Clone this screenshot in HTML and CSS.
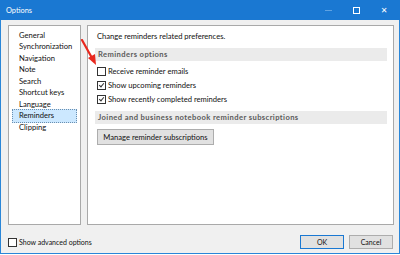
FILE: index.html
```html
<!DOCTYPE html>
<html lang="en">
<head>
    <meta charset="UTF-8">
    <title>Options</title>
    <link rel="stylesheet" href="styles.css">
</head>
<body>
    <div class="window">
        <div class="titlebar">
            <span class="title">Options</span>
            <div class="controls">
                <span class="ctl min"></span>
                <span class="ctl max"></span>
                <span class="ctl close">&#x2715;</span>
            </div>
        </div>

        <div class="content">
            <ul class="nav-list">
                <li>General</li>
                <li>Synchronization</li>
                <li>Navigation</li>
                <li>Note</li>
                <li>Search</li>
                <li>Shortcut keys</li>
                <li>Language</li>
                <li class="selected">Reminders</li>
                <li>Clipping</li>
            </ul>

            <div class="panel">
                <p class="intro">Change reminders related preferences.</p>
                <div class="section-head">Reminders options</div>
                <label class="check"><span class="box"></span>Receive reminder emails</label>
                <label class="check"><span class="box checked"></span>Show upcoming reminders</label>
                <label class="check"><span class="box checked"></span>Show recently completed reminders</label>
                <div class="section-head second">Joined and business notebook reminder subscriptions</div>
                <button class="btn manage" type="button">Manage reminder subscriptions</button>
            </div>
        </div>

        <div class="footer">
            <label class="check small"><span class="box"></span>Show advanced options</label>
            <div class="actions">
                <button class="btn default" type="button">OK</button>
                <button class="btn" type="button">Cancel</button>
            </div>
        </div>

        <svg class="arrow" width="20" height="30" viewBox="0 0 20 30">
            <line x1="2" y1="1" x2="12" y2="19" stroke="#e8281e" stroke-width="2.2" stroke-linecap="round"/>
            <polygon points="16,26 8,19 15,15" fill="#e8281e"/>
        </svg>
    </div>
</body>
</html>
```

FILE: styles.css
```css
body {
    margin: 0;
    background: #ffffff;
    font-family: Lato, "Noto Sans", sans-serif;
    font-size: 7.6px;
    color: #111;
}
.window {
    position: relative;
    width: 398px;
    height: 233px;
    background: #f0f0f0;
    border: 1px solid #2a86d8;
    border-top: none;
    padding-top: 20px;
}
.titlebar {
    position: absolute;
    top: 0;
    left: -1px;
    right: -1px;
    height: 20px;
    background: #1a78d2;
    color: #ffffff;
    display: flex;
    align-items: center;
    justify-content: space-between;
}
.title {
    padding-left: 6px;
    font-size: 7.4px;
}
.controls {
    display: flex;
    align-items: center;
    height: 100%;
}
.ctl {
    width: 28px;
    display: flex;
    justify-content: center;
    align-items: center;
    color: #ffffff;
}
.min::before {
    content: "";
    width: 7px;
    height: 1px;
    background: #5fa2e2;
}
.max::before {
    content: "";
    width: 5px;
    height: 5px;
    border: 1px solid #ffffff;
}
.close {
    font-family: "DejaVu Sans", sans-serif;
    font-size: 8px;
    padding-right: 2px;
}
.content {
    display: flex;
    gap: 6px;
    padding: 5px 5px 0 7px;
}
.nav-list {
    list-style: none;
    margin: 0;
    padding: 3px 2px;
    width: 67px;
    height: 192px;
    background: #ffffff;
    border: 1px solid #a9a9a9;
}
.nav-list li {
    height: 11.45px;
    line-height: 11.45px;
    padding-left: 6px;
    margin: 0 1px -2px;
    border: 1px solid transparent;
}
.nav-list li:last-child {
    margin-bottom: 0;
}
.nav-list li.selected {
    background: #cce8ff;
    border: 1px dotted #6a8fb0;
}
.panel {
    flex: 1;
    height: 198px;
    background: #ffffff;
    border: 1px solid #a9a9a9;
    padding: 0 6px 0 7px;
}
.intro {
    margin: 6px 0 0 2px;
    height: 16px;
    line-height: 9px;
}
.section-head {
    height: 13px;
    line-height: 13px;
    background: #ebebeb;
    color: #5a5a5a;
    font-weight: 700;
    letter-spacing: 0.4px;
    padding-left: 3px;
    margin-bottom: 3px;
}
.section-head.second {
    margin-top: 5px;
}
.check {
    display: flex;
    align-items: center;
    height: 14px;
    padding-left: 2px;
}
.box {
    width: 7px;
    height: 7px;
    border: 1px solid #333;
    background: #ffffff;
    margin-right: 2px;
    position: relative;
}
.box.checked::after {
    content: "";
    position: absolute;
    left: 2px;
    top: 0px;
    width: 2px;
    height: 4px;
    border: solid #333;
    border-width: 0 1px 1px 0;
    transform: rotate(40deg);
}
.btn {
    font-family: Lato, "Noto Sans", sans-serif;
    font-size: 7.6px;
    color: #111;
    background: #e1e1e1;
    border: 1px solid #adadad;
    padding: 0;
    height: 14px;
    line-height: 12px;
    white-space: nowrap;
}
.manage {
    margin: 2px 0 0 2px;
    width: 117px;
    height: 16px;
}
.footer {
    display: flex;
    justify-content: space-between;
    align-items: center;
    padding: 10px 6px 0 7px;
}
.check.small {
    padding-left: 0;
    font-size: 7px;
}
.actions {
    display: flex;
    gap: 5px;
}
.actions .btn {
    width: 44px;
    font-size: 7px;
}
.btn.default {
    border: 1px solid #1a78d2;
}
.arrow {
    position: absolute;
    left: 79px;
    top: 39px;
}
```
